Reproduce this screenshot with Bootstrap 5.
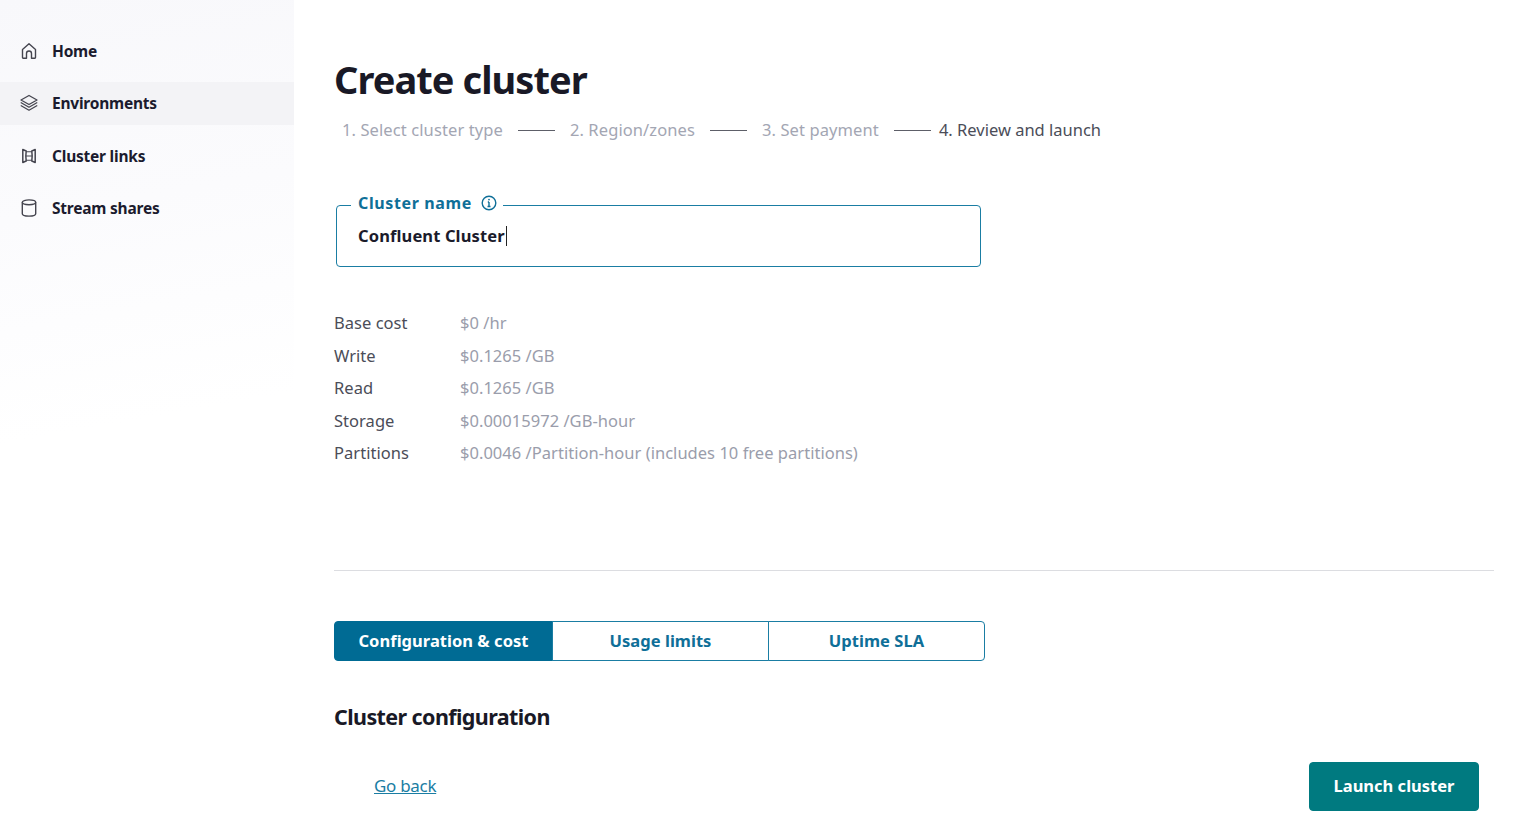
<!DOCTYPE html>
<html lang="en">
<head>
<meta charset="utf-8">
<title>Create cluster</title>
<link href="https://cdn.jsdelivr.net/npm/bootstrap@5.3.0/dist/css/bootstrap.min.css" rel="stylesheet">
<style>
html,body{height:100%;overflow:hidden}
body{font-family:"Noto Sans","Open Sans",sans-serif;color:#1b1b2b;background:#fff}
.shell{height:838px}
.side-rail{width:294px;flex:none;padding-top:29px;background:linear-gradient(170deg,#f8f8fb 0,#fbfbfd 25%,#fff 50%)}
.side-item{height:43px;margin-bottom:9.5px;padding:0 0 0 20px;gap:14px;font-size:15.5px;font-weight:700;letter-spacing:-.22px;color:#1b1b2e;text-decoration:none}
.side-label{padding-top:2px}
.side-item.is-current{background:#f3f3f6}
.side-item svg{width:18px;height:18px;flex:none;color:#45454f}
.main-pane{padding:0 22px 0 40px}
.page-title{font-size:38px;font-weight:700;letter-spacing:-.95px;line-height:46px;margin:56px 0 0;color:#191926}
.step-row{margin:16px 0 0 8px;font-size:16.5px;line-height:24px;color:#a3a6b3;letter-spacing:.1px}
.step-line{width:37px;height:1px;background:#5d5f68;margin:0 15px}
.step-line.is-last{margin-right:8px}
.step-now{color:#4b4d58;letter-spacing:0}
.name-field{width:645px;height:62px;margin:63px 0 0 2px;border:1px solid #1a7da3;border-radius:4px;padding:0 21px}
.name-legend{top:-15px;left:14px;padding:0 6px 0 7px;gap:9px;background:#fff;color:#0f6f98;font-size:16px;font-weight:700;letter-spacing:.63px;line-height:24px}
.name-legend svg{width:16px;height:16px}
.name-value{font-size:16.5px;font-weight:700;letter-spacing:.12px;color:#1b1b2b}
.type-caret{width:1px;height:20px;background:#222;margin-left:1px}
.cost-list{margin:40px 0 0;font-size:16.5px;letter-spacing:.03px;line-height:32.5px}
.cost-list dt{width:126px;font-weight:400;color:#4b4d58}
.cost-list dd{margin:0;color:#9a9dab}
.split-rule{margin:100px 0 0;border:0;border-top:1px solid #dcdde1;opacity:1}
.tab-group{width:651px;margin-top:50px}
.tab-group .btn{height:40px;flex:1 1 0;padding:1px 0 0;font-size:16.5px;font-weight:700;letter-spacing:.03px;color:#0f6f98;border-color:#1a7da3;border-radius:4px;background:#fff}
.tab-group .btn.is-on{background:#006b94;border-color:#006b94;color:#fff;flex:0 0 219px}
.sub-title{font-size:21.5px;font-weight:700;letter-spacing:-.6px;line-height:30px;margin:41px 0 0;color:#191926}
.foot-row{margin-top:30px;padding:0 15px 0 40px}
.back-link{font-size:17px;letter-spacing:-.3px;color:#1a7da3}
.launch-btn{width:170px;height:49px;padding:0;background:#007a80;border-color:#007a80;color:#fff;font-size:16.5px;font-weight:700;border-radius:4px}
.launch-btn:hover{background:#007a80;border-color:#007a80;color:#fff}
</style>
</head>
<body>
<div class="shell d-flex">
  <nav class="side-rail d-flex flex-column">
    <a href="#" class="side-item d-flex align-items-center">
      <svg viewBox="0 0 18 18" fill="none" stroke="currentColor" stroke-width="1.4" stroke-linejoin="round" stroke-linecap="round"><path d="M2.500 7.500 9 1.800l6.500 5.700v7.700a1 1 0 0 1-1 1h-3v-4.700a2.500 2.500 0 0 0-5 0v4.700h-3a1 1 0 0 1-1-1z"/></svg>
      <span class="side-label">Home</span>
    </a>
    <a href="#" class="side-item is-current d-flex align-items-center">
      <svg viewBox="0 0 18 18" fill="none" stroke="currentColor" stroke-width="1.3" stroke-linejoin="round" stroke-linecap="round"><path d="M9 1.500 17 6 9 10.500 1 6z"/><path d="M1.200 8.800 9 13.200l7.800-4.400"/><path d="M1.200 11.800 9 16.200l7.800-4.400"/></svg>
      <span class="side-label">Environments</span>
    </a>
    <a href="#" class="side-item d-flex align-items-center">
      <svg viewBox="0 0 18 18" fill="none" stroke="currentColor" stroke-linejoin="round"><path stroke-width="1.500" d="M2.800 2.500 6.200 4c-.5 3.300-.5 6.700 0 10l-3.400 1.500zM15.200 2.500 11.800 4c.5 3.300.5 6.700 0 10l3.400 1.500z"/><path stroke-width="1.100" d="M6.200 4.800h5.600M6 9h6M6.200 13.200h5.600"/></svg>
      <span class="side-label">Cluster links</span>
    </a>
    <a href="#" class="side-item d-flex align-items-center">
      <svg viewBox="0 0 18 18" fill="none" stroke="currentColor" stroke-width="1.4"><ellipse cx="9" cy="3.300" rx="6.700" ry="2.400"/><path d="M2.300 3.300v11.400c0 1.300 3 2.400 6.700 2.400s6.700-1.100 6.700-2.400V3.300"/></svg>
      <span class="side-label">Stream shares</span>
    </a>
  </nav>
  <main class="main-pane flex-grow-1">
    <h1 class="page-title">Create cluster</h1>
    <div class="step-row d-flex align-items-center">
      <span>1. Select cluster type</span><span class="step-line"></span>
      <span>2. Region/zones</span><span class="step-line"></span>
      <span>3. Set payment</span><span class="step-line is-last"></span>
      <span class="step-now">4. Review and launch</span>
    </div>
    <div class="name-field position-relative d-flex align-items-center">
      <div class="name-legend position-absolute d-flex align-items-center">
        Cluster name
        <svg viewBox="0 0 16 16" fill="none" stroke="currentColor" stroke-width="1.400"><circle cx="8" cy="8" r="6.800"/><path d="M8 7v4.500M6.500 11.500h3M6.800 7H8"/><circle cx="8" cy="4.600" r=".9" fill="currentColor" stroke="none"/></svg>
      </div>
      <span class="name-value">Confluent Cluster</span><span class="type-caret"></span>
    </div>
    <dl class="cost-list">
      <div class="d-flex"><dt>Base cost</dt><dd>$0 /hr</dd></div>
      <div class="d-flex"><dt>Write</dt><dd>$0.1265 /GB</dd></div>
      <div class="d-flex"><dt>Read</dt><dd>$0.1265 /GB</dd></div>
      <div class="d-flex"><dt>Storage</dt><dd>$0.00015972 /GB-hour</dd></div>
      <div class="d-flex"><dt>Partitions</dt><dd>$0.0046 /Partition-hour (includes 10 free partitions)</dd></div>
    </dl>
    <hr class="split-rule">
    <div class="tab-group btn-group d-flex" role="group">
      <button type="button" class="btn is-on">Configuration &amp; cost</button>
      <button type="button" class="btn">Usage limits</button>
      <button type="button" class="btn">Uptime SLA</button>
    </div>
    <h2 class="sub-title">Cluster configuration</h2>
    <div class="foot-row d-flex justify-content-between align-items-center">
      <a href="#" class="back-link">Go back</a>
      <button type="button" class="btn launch-btn">Launch cluster</button>
    </div>
  </main>
</div>
<script src="https://cdn.jsdelivr.net/npm/bootstrap@5.3.0/dist/js/bootstrap.bundle.min.js"></script>
</body>
</html>
